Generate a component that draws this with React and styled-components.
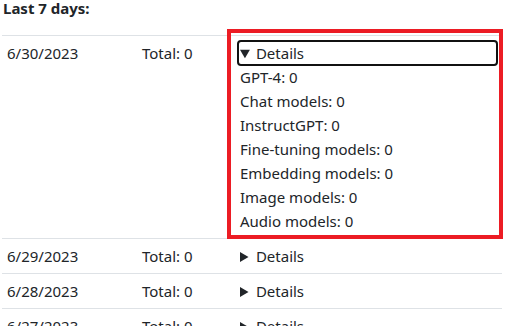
import React from "react";
import styled, { createGlobalStyle } from "styled-components";

const GlobalStyle = createGlobalStyle`
  body {
    margin: 0;
    background: #fff;
    color: #212529;
    font-family: "Segoe UI", "Noto Sans", sans-serif;
    font-size: 15px;
  }
`;

const days = [
  { date: "6/30/2023", total: 0, open: true, highlight: true },
  { date: "6/29/2023", total: 0 },
  { date: "6/28/2023", total: 0 },
  { date: "6/27/2023", total: 0 },
  { date: "6/26/2023", total: 0 },
  { date: "6/25/2023", total: 0 },
  { date: "6/24/2023", total: 0 },
];

const models = [
  "GPT-4",
  "Chat models",
  "InstructGPT",
  "Fine-tuning models",
  "Embedding models",
  "Image models",
  "Audio models",
];

const Page = styled.div`
  padding: 0 5px 0 2px;
`;

const Heading = styled.h3`
  margin: 0 0 19px 1px;
  font-size: 15px;
  font-weight: 700;
  line-height: 16px;
`;

const Table = styled.table`
  width: 500px;
  border-collapse: collapse;
  line-height: 24px;
`;

const Row = styled.tr`
  border-top: 1px solid #dee2e6;
`;

const Cell = styled.td`
  position: relative;
  padding: 5px;
  vertical-align: top;
  width: ${(p) => p.$width || "auto"};
`;

const Summary = styled.summary`
  cursor: pointer;
  border-radius: 3px;
  padding-left: 2px;
  outline: ${(p) => (p.$focused ? "2px solid #111" : "none")};
  outline-offset: -1px;
`;

const Line = styled.div`
  padding-left: 2px;
`;

// screenshot annotation box drawn over the open cell
const Highlight = styled.span`
  position: absolute;
  top: -7px;
  left: -6px;
  right: -1px;
  bottom: -1px;
  border: 4px solid #ec1c24;
  pointer-events: none;
`;

export default function App() {
  return (
    <Page>
      <GlobalStyle />
      <Heading>Last 7 days:</Heading>
      <Table>
        <tbody>
          {days.map((day) => (
            <Row key={day.date}>
              <Cell $width="125px">{day.date}</Cell>
              <Cell $width="86px">Total: {day.total}</Cell>
              <Cell>
                <details open={day.open}>
                  <Summary $focused={day.open}>Details</Summary>
                  {models.map((m) => (
                    <Line key={m}>{m}: 0</Line>
                  ))}
                </details>
                {day.highlight && <Highlight />}
              </Cell>
            </Row>
          ))}
        </tbody>
      </Table>
    </Page>
  );
}
